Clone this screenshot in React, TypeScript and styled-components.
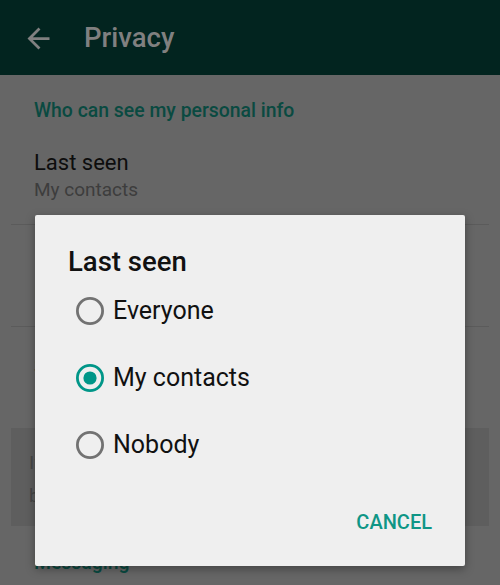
import styled, { createGlobalStyle } from 'styled-components'
import { useState } from 'react'

const GlobalStyle = createGlobalStyle`
	html, body {
		margin: 0;
		padding: 0;
		background: #666666;
	}
	body {
		font-family: Roboto, 'Noto Sans', 'Liberation Sans', sans-serif;
	}
`

const options = ['Everyone', 'My contacts', 'Nobody']

const BackArrow = () => (
	<svg width="33" height="33" viewBox="0 0 24 24" fill="#808080">
		<path d="M20 11H7.83l5.59-5.59L12 4l-8 8 8 8 1.41-1.41L7.83 13H20v-2z" />
	</svg>
)

const RadioIcon = ({ checked }: { checked: boolean }) => (
	<svg width="28" height="28" viewBox="0 0 28 28">
		<circle
			cx="14"
			cy="14"
			r="12.6"
			fill="none"
			stroke={checked ? '#009688' : '#727272'}
			strokeWidth="2.8"
		/>
		{checked && <circle cx="14" cy="14" r="6.6" fill="#009688" />}
	</svg>
)

const App = () => {
	const [selected, setSelected] = useState('My contacts')

	return (
		<>
			<GlobalStyle />
			<Page>
				<Header>
					<IconButton>
						<BackArrow />
					</IconButton>
					<Title>Privacy</Title>
				</Header>

				<SectionTitle>Who can see my personal info</SectionTitle>
				<Row>
					<RowTitle>Last seen</RowTitle>
					<RowValue>My contacts</RowValue>
				</Row>
				<Row>
					<RowTitle>Profile photo</RowTitle>
					<RowValue>Everyone</RowValue>
				</Row>
				<PlainRow>
					<RowTitle>Status</RowTitle>
					<RowValue>My contacts</RowValue>
				</PlainRow>
				<InfoBox>
					If you don't share your last seen, you won't
					<br />
					be able to see other people's last seen
				</InfoBox>
				<SectionTitle $top={25}>Messaging</SectionTitle>

				<Dialog>
					<DialogTitle>Last seen</DialogTitle>
					<OptionList>
						{options.map((option) => (
							<Option key={option} onClick={() => setSelected(option)}>
								<RadioIcon checked={selected === option} />
								<OptionLabel>{option}</OptionLabel>
							</Option>
						))}
					</OptionList>
					<DialogActions>
						<TextButton>CANCEL</TextButton>
					</DialogActions>
				</Dialog>
			</Page>
		</>
	)
}

export default App

const Page = styled.div`
	position: relative;
	width: 500px;
	height: 585px;
	overflow: hidden;
	background: #666666;
	display: flex;
	flex-direction: column;
`

const Header = styled.div`
	height: 75px;
	flex-shrink: 0;
	background: #02241f;
	display: flex;
	align-items: center;
	padding-left: 22px;
	box-sizing: border-box;
`

const IconButton = styled.div`
	display: flex;
	width: 33px;
	height: 33px;
	margin-top: 1px;
`

const Title = styled.div`
	margin-left: 29px;
	font-size: 27.5px;
	font-weight: 500;
	color: #808080;
	line-height: 32px;
	margin-top: 1px;
`

const SectionTitle = styled.div<{ $top?: number }>`
	margin-top: ${({ $top }) => $top ?? 24}px;
	padding-left: 34px;
	font-size: 19.4px;
	font-weight: 500;
	line-height: 24px;
	color: #0a4a41;
	flex-shrink: 0;
`

const Row = styled.div`
	margin: 0 11px;
	padding: 27px 23px 22px;
	border-bottom: 1px solid #5b5b5b;
	display: flex;
	flex-direction: column;
	gap: 2px;
	flex-shrink: 0;
`

const PlainRow = styled(Row)`
	border-bottom: none;
	height: 101px;
	box-sizing: border-box;
`

const RowTitle = styled.div`
	font-size: 22px;
	line-height: 26px;
	color: #0d0d0d;
`

const RowValue = styled.div`
	font-size: 19px;
	line-height: 24px;
	color: #3d3d3d;
`

const InfoBox = styled.div`
	margin: 0 11px;
	padding: 18px 18px 14px;
	background: #5e5e5e;
	font-size: 19px;
	line-height: 33px;
	color: #474747;
	white-space: nowrap;
	overflow: hidden;
	flex-shrink: 0;
`

const Dialog = styled.div`
	position: absolute;
	left: 35px;
	top: 215px;
	width: 430px;
	height: 351px;
	box-sizing: border-box;
	background: #efefef;
	border-radius: 2px;
	box-shadow: 0 3px 10px rgba(0, 0, 0, 0.35);
	padding-top: 31px;
	display: flex;
	flex-direction: column;
`

const DialogTitle = styled.div`
	padding-left: 33px;
	font-size: 27.5px;
	font-weight: 500;
	line-height: 31px;
	color: #111111;
`

const OptionList = styled.div`
	display: flex;
	flex-direction: column;
`

const Option = styled.div`
	height: 67px;
	display: flex;
	align-items: center;
	gap: 9px;
	padding-left: 41px;
	cursor: pointer;
`

const OptionLabel = styled.span`
	font-size: 25px;
	color: #111111;
	line-height: 28px;
`

const DialogActions = styled.div`
	margin-top: 26px;
	display: flex;
	justify-content: flex-end;
	padding-right: 33px;
`

const TextButton = styled.button`
	background: none;
	border: none;
	padding: 0;
	height: 36px;
	font-family: inherit;
	font-size: 20px;
	font-weight: 500;
	color: #0f9686;
	cursor: pointer;
`
